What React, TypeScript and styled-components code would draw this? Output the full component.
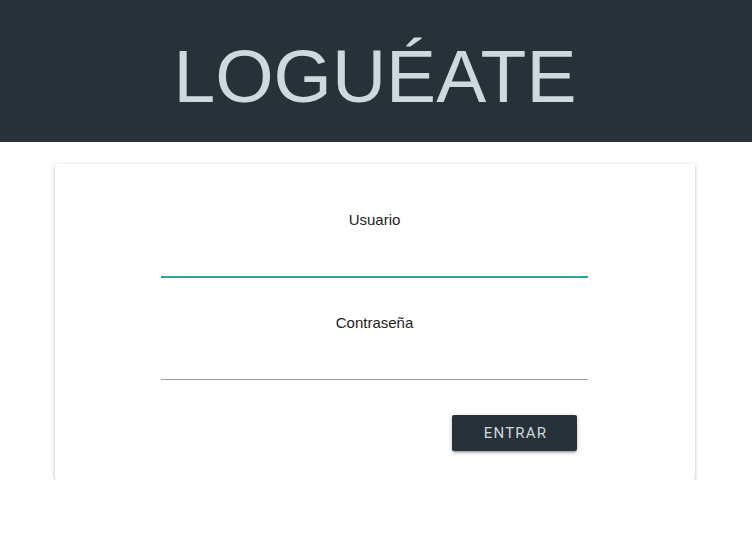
import React from "react";
import styled, { createGlobalStyle } from "styled-components";

const Global = createGlobalStyle`
  html, body { margin: 0; padding: 0; background: #ffffff; }
  body { font-family: "Liberation Sans", Arial, sans-serif; }
  * { box-sizing: border-box; }
`;

const Header = styled.header`
  background: #263238;
  height: 142px;
  padding-top: 34px;
  padding-right: 2px;
  display: flex;
  justify-content: center;
  align-items: flex-start;
`;

const Title = styled.h1`
  margin: 0;
  font-family: "Liberation Sans", Arial, sans-serif;
  font-weight: 400;
  font-size: 75px;
  line-height: 84px;
  color: #cfd8dc;
`;

const Card = styled.form`
  width: 640px;
  margin: 22px 57px 0 55px;
  background: #fff;
  border-radius: 2px;
  box-shadow: 0 2px 2px 0 rgba(0, 0, 0, 0.14), 0 3px 1px -2px rgba(0, 0, 0, 0.12),
    0 1px 5px 0 rgba(0, 0, 0, 0.2);
  padding: 47px 1px 29px 0;
  display: flex;
  flex-direction: column;
  align-items: center;
`;

const Field = styled.div<{ $gap?: number }>`
  width: 427px;
  display: flex;
  flex-direction: column;
  align-items: center;
  margin-top: ${(p) => p.$gap ?? 0}px;
`;

const Label = styled.label`
  font-family: "Liberation Sans", Arial, sans-serif;
  font-size: 15px;
  line-height: 17px;
  color: #212121;
`;

const Input = styled.input<{ $active?: boolean }>`
  width: 100%;
  height: ${(p) => (p.$active ? 50 : 49)}px;
  border: none;
  border-bottom: ${(p) => (p.$active ? "2px solid #26a69a" : "1px solid #9e9e9e")};
  outline: none;
  background: transparent;
  font-size: 16px;
  padding: 0;
`;

const Actions = styled.div`
  width: 427px;
  display: flex;
  justify-content: flex-end;
  padding-right: 11px;
  margin-top: 35px;
`;

const Button = styled.button`
  width: 125px;
  height: 36px;
  border: none;
  border-radius: 2px;
  background: #263238;
  color: #cfd8dc;
  font-family: Roboto, "Liberation Sans", sans-serif;
  font-size: 15px;
  letter-spacing: 1.2px;
  text-transform: uppercase;
  padding: 0 0 0 2px;
  box-shadow: 0 2px 2px 0 rgba(0, 0, 0, 0.14), 0 3px 1px -2px rgba(0, 0, 0, 0.12),
    0 1px 5px 0 rgba(0, 0, 0, 0.2);
  cursor: pointer;
`;

export default function App() {
  return (
    <>
      <Global />
      <Header>
        <Title>LOGUÉATE</Title>
      </Header>
      <Card onSubmit={(e) => e.preventDefault()}>
        <Field>
          <Label htmlFor="usuario">Usuario</Label>
          <Input id="usuario" type="text" $active />
        </Field>
        <Field $gap={36}>
          <Label htmlFor="pass">Contraseña</Label>
          <Input id="pass" type="password" />
        </Field>
        <Actions>
          <Button type="submit">Entrar</Button>
        </Actions>
      </Card>
    </>
  );
}
